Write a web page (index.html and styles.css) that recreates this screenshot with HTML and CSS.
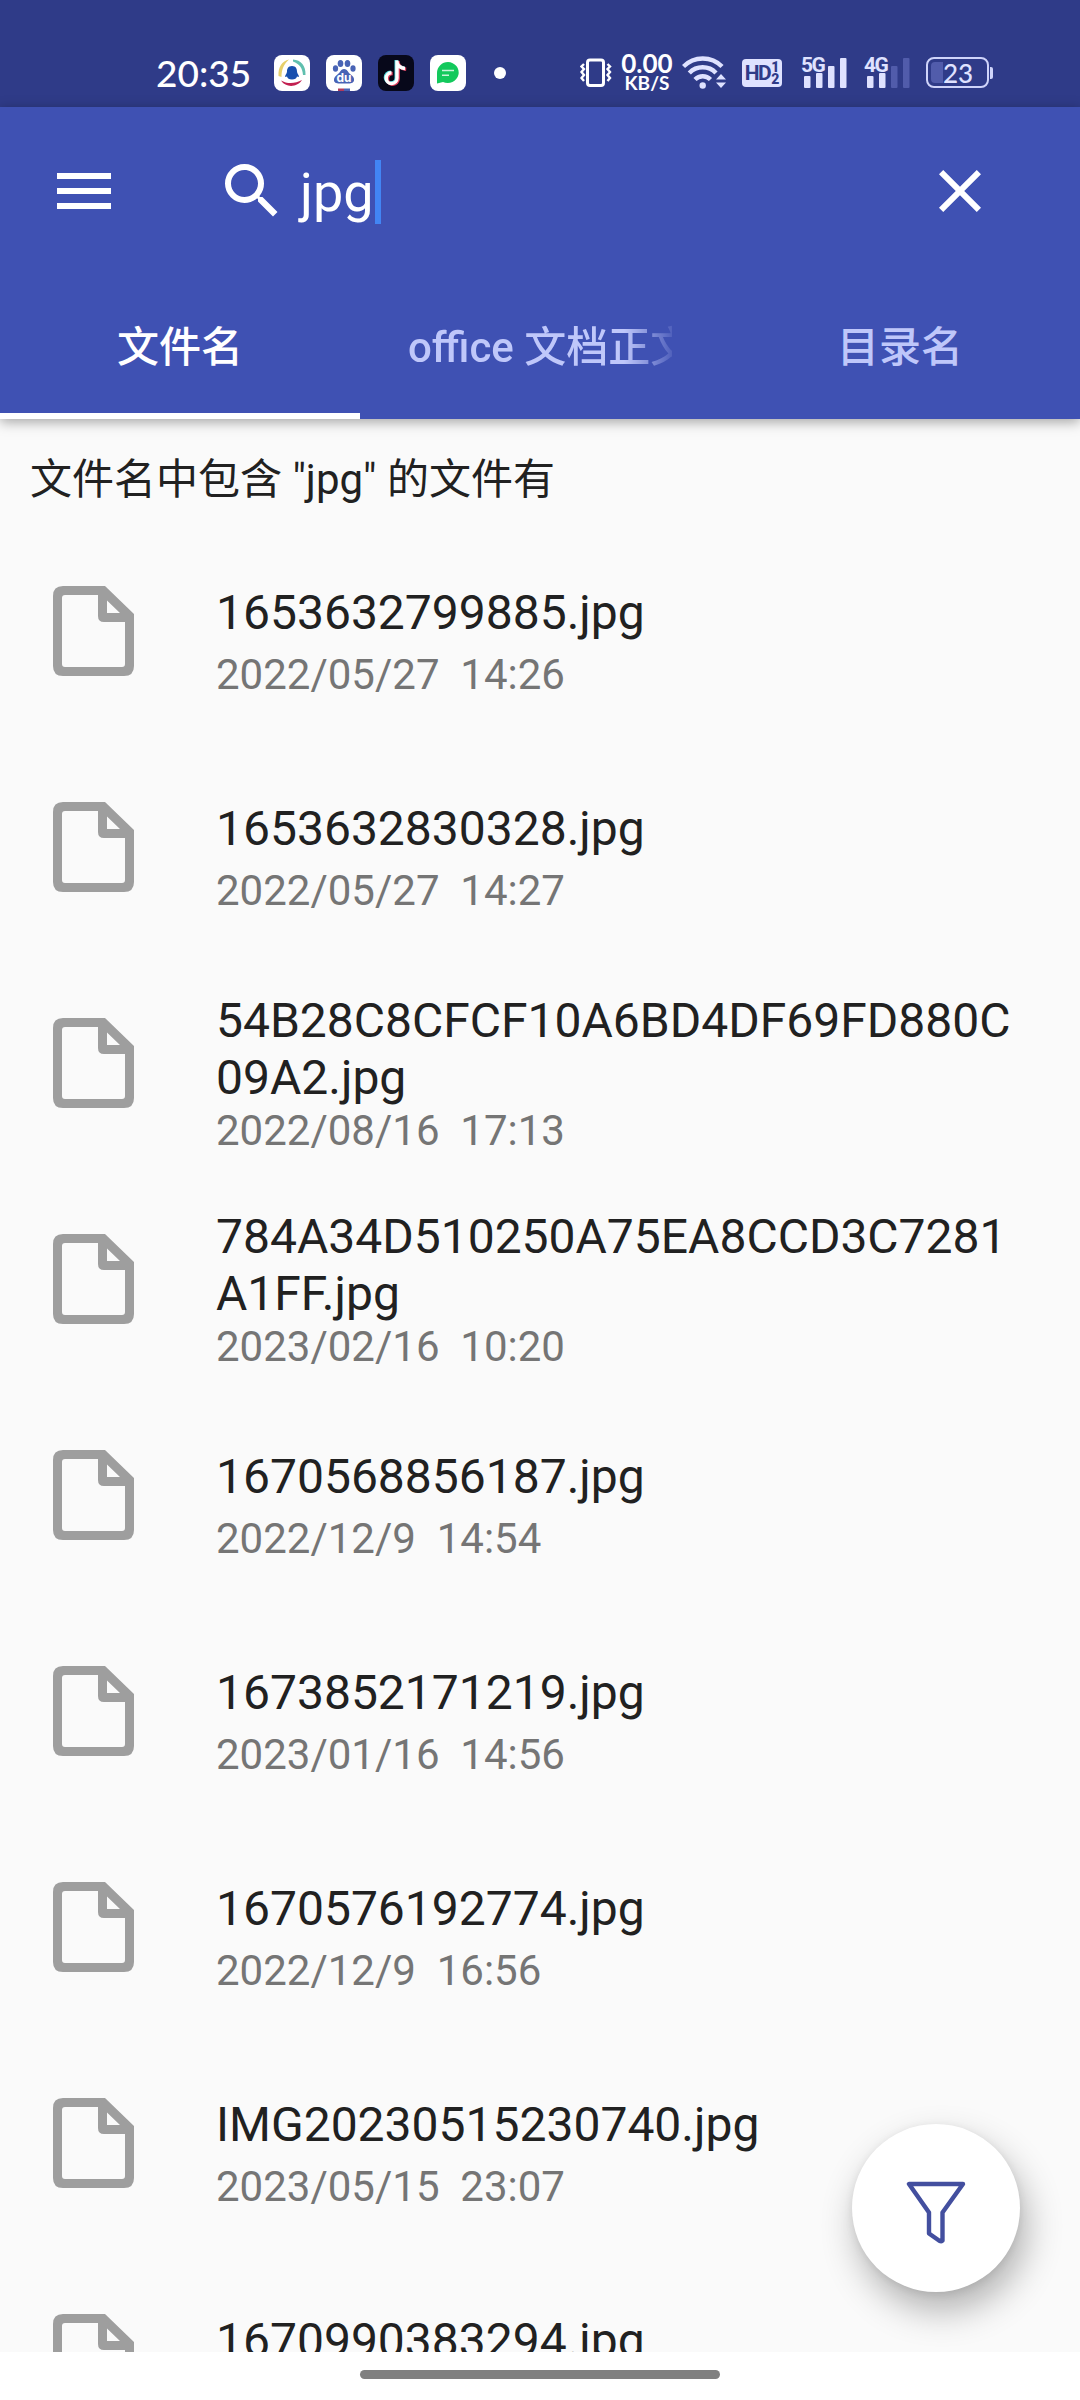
FILE: index.html
```html
<!DOCTYPE html>
<html lang="zh-CN">
<head>
<meta charset="utf-8">
<title>文件搜索</title>
<link rel="stylesheet" href="styles.css">
</head>
<body>
<svg class="defs" width="0" height="0" aria-hidden="true">
  <symbol id="file" viewBox="0 0 81 90">
    <path fill-rule="evenodd" d="M10 0H52L81 28V80Q81 90 71 90H10Q0 90 0 80V10Q0 0 10 0ZM12 9Q9 9 9 12V78Q9 81 12 81H69Q72 81 72 78V36H51Q45 36 45 30V9ZM54 14.5V27H67Z"/>
  </symbol>
</svg>
<div class="screen">
  <div class="status">
    <span class="clock">20:35</span>
    <div class="apps">
      <svg width="36" height="36" viewBox="0 0 36 36">
        <rect width="36" height="36" rx="8" fill="#fff"/>
        <path d="M4.500 21C4 12 8 6 15 4.500 10 9 7.500 14 7.500 22z" fill="#e6cf6a"/>
        <path d="M19 4.500C27 5 32 11 31.500 20L29 20C28.500 13 25.500 9 19 6.500z" fill="#5fbfae"/>
        <path d="M7 25.500C13 29 21 29 28 25 24 32 12 33.500 7 25.500z" fill="#c22050"/>
        <path d="M18 11c-4 0-5 3-5 5.500 0 2-2 3.500-2 5.500l2-.5c.5 2 2 3 5 3s4.500-1 5-3l2 .5c0-2-2-3.500-2-5.500 0-2.500-1-5.500-5-5.500z" fill="#174fae"/>
      </svg>
      <svg width="36" height="36" viewBox="0 0 36 36">
        <rect width="36" height="36" rx="8" fill="#fff"/>
        <g fill="#4863b5">
          <ellipse cx="9.500" cy="13.500" rx="2.600" ry="3.300"/><ellipse cx="14.500" cy="8.500" rx="2.800" ry="3.600"/>
          <ellipse cx="21.500" cy="8.500" rx="2.800" ry="3.600"/><ellipse cx="27" cy="13.500" rx="2.600" ry="3.300"/>
          <path d="M18 14c3 0 4 3 6 5 3 2 4.500 4 4 6.500-.8 3.500-5 3-10 3s-9.500.5-10-3C7.500 23 9.500 21 12 19c2.500-2 3-5 6-5z"/>
        </g>
        <text x="18" y="26.500" class="du">du</text>
        <path d="M12 33.500h6v2.500h-6z" fill="#b23a5c"/><path d="M18 33.500h6v2.500h-6z" fill="#4863b5"/>
      </svg>
      <svg width="36" height="36" viewBox="0 0 36 36">
        <rect width="36" height="36" rx="8" fill="#07081a"/>
        <g fill="none" stroke-width="3.400">
          <path d="M19 5.500v17.500a5.400 5.400 0 1 1-5.500-5.300M19 7.500q1.500 5.500 8 6" stroke="#4ed6dc" transform="translate(-.8 -.6)"/>
          <path d="M19 5.500v17.500a5.400 5.400 0 1 1-5.500-5.300M19 7.500q1.500 5.500 8 6" stroke="#e0405f" transform="translate(1.200 .8)"/>
          <path d="M19 5.500v17.500a5.400 5.400 0 1 1-5.500-5.300M19 7.500q1.500 5.500 8 6" stroke="#fff"/>
        </g>
      </svg>
      <svg width="36" height="36" viewBox="0 0 36 36">
        <rect width="36" height="36" rx="8" fill="#fff"/>
        <path d="M18 7a11 10.500 0 1 1-5 20L7 28.500V18A11 11 0 0 1 18 7z" fill="#13c95c"/>
        <path d="M12 15.500h12M12 20.200h7" stroke="#c9f5da" stroke-width="1.500"/>
      </svg>
    </div>
    <i class="dot"></i>
    <svg class="vibrate" width="32" height="30" viewBox="0 0 32 30" fill="none" stroke="#fff">
      <rect x="7.500" y="2" width="16" height="25.500" rx="2.500" stroke-width="3"/>
      <path d="M4 6 1.500 8.500 4 11 1.500 14 4 17 1.500 20 4 23M27.500 6 30 8.500 27.500 11 30 14 27.500 17 30 20 27.500 23" stroke-width="2.400"/>
    </svg>
    <div class="speed"><span>0.00</span><span>KB/S</span></div>
    <svg class="wifi" width="46" height="36" viewBox="0 0 46 36" fill="none" stroke="#dfe2ff" stroke-width="4.400">
      <path d="M1.500 11.500A27 27 0 0 1 40 11.500M7.300 18A18.500 18.500 0 0 1 34 18M13 24.500A11 11 0 0 1 28.500 24.500"/>
      <circle cx="20.700" cy="30.500" r="3.200" fill="#dfe2ff" stroke="none"/>
      <path d="M34 24.500 39 19 44 24.500zM34 27.500H44L39 33z" fill="#dfe2ff" stroke="none"/>
    </svg>
    <div class="hd"><span>HD</span><span class="sims"><b>1</b><b>2</b></span></div>
    <div class="signal">
      <span>5G</span>
      <svg width="44" height="31" viewBox="0 0 44 31" fill="#dfe2ff"><rect y="19" width="6.500" height="12" rx="1"/><rect x="12" y="16" width="6.500" height="15" rx="1"/><rect x="24" y="9" width="6.500" height="22" rx="1"/><rect x="36" y="1" width="6.500" height="30" rx="1"/></svg>
    </div>
    <div class="signal second">
      <span>4G</span>
      <svg width="44" height="31" viewBox="0 0 44 31" fill="#dfe2ff"><rect y="19" width="6.500" height="12" rx="1"/><rect x="12" y="16" width="6.500" height="15" rx="1"/><g fill="#515cab"><rect x="24" y="9" width="6.500" height="22" rx="1"/><rect x="36" y="1" width="6.500" height="30" rx="1"/></g></svg>
    </div>
    <div class="battery"><i class="level"></i><span>23</span></div><i class="nub"></i>
  </div>
  <header class="appbar">
    <div class="toolbar">
      <svg class="icon" viewBox="0 0 24 24"><path d="M3 18h18v-2H3v2zm0-5h18v-2H3v2zm0-7v2h18V6H3z"/></svg>
      <div class="search">
        <svg class="icon" viewBox="0 0 24 24"><path d="M15.500 14h-.79l-.28-.27A6.471 6.471 0 0 0 16 9.500 6.500 6.500 0 1 0 9.500 16c1.610 0 3.090-.59 4.230-1.570l.27.280v.79l5 4.990L20.490 19l-4.990-5zm-6 0C7.010 14 5 11.990 5 9.500S7.010 5 9.500 5 14 7.010 14 9.500 11.990 14 9.500 14z"/></svg>
        <span class="query">jpg</span><i class="caret"></i>
      </div>
      <svg class="icon" viewBox="0 0 24 24"><path d="M19 6.410L17.590 5 12 10.590 6.410 5 5 6.410 10.590 12 5 17.590 6.410 19 12 13.410 17.590 19 19 17.590 13.410 12z"/></svg>
    </div>
    <nav class="tabs">
      <div class="tab active"><span>文件名</span></div>
      <div class="tab"><span class="fade">office 文档正文</span></div>
      <div class="tab"><span>目录名</span></div>
    </nav>
  </header>
  <main class="content">
    <p class="summary">文件名中包含 "jpg" 的文件有</p>
    <ul class="files">
      <li><svg><use href="#file"/></svg><div><p class="name">1653632799885.jpg</p><p class="date">2022/05/27&nbsp; 14:26</p></div></li>
      <li><svg><use href="#file"/></svg><div><p class="name">1653632830328.jpg</p><p class="date">2022/05/27&nbsp; 14:27</p></div></li>
      <li class="tall"><svg><use href="#file"/></svg><div><p class="name">54B28C8CFCF10A6BD4DF69FD880C<wbr>09A2.jpg</p><p class="date">2022/08/16&nbsp; 17:13</p></div></li>
      <li class="tall"><svg><use href="#file"/></svg><div><p class="name">784A34D510250A75EA8CCD3C7281<wbr>A1FF.jpg</p><p class="date">2023/02/16&nbsp; 10:20</p></div></li>
      <li><svg><use href="#file"/></svg><div><p class="name">1670568856187.jpg</p><p class="date">2022/12/9&nbsp; 14:54</p></div></li>
      <li><svg><use href="#file"/></svg><div><p class="name">1673852171219.jpg</p><p class="date">2023/01/16&nbsp; 14:56</p></div></li>
      <li><svg><use href="#file"/></svg><div><p class="name">1670576192774.jpg</p><p class="date">2022/12/9&nbsp; 16:56</p></div></li>
      <li><svg><use href="#file"/></svg><div><p class="name">IMG20230515230740.jpg</p><p class="date">2023/05/15&nbsp; 23:07</p></div></li>
      <li><svg><use href="#file"/></svg><div><p class="name">1670990383294.jpg</p></div></li>
    </ul>
    <div class="fab">
      <svg width="60" height="64" viewBox="0 0 60 64" fill="none" stroke="#434f9f" stroke-width="4.400" stroke-linejoin="round"><path d="M3 4H57L36.500 32.500V60.500Q35.500 62 33 60.500L23 53.500V32.500Z"/></svg>
    </div>
  </main>
  <footer class="gesture"><i></i></footer>
</div>
</body>
</html>
```
FILE: styles.css
```css
* { box-sizing: border-box; margin: 0; padding: 0; }
body { background: #fff; }
svg { display: block; flex: none; }
.defs { position: absolute; }
.screen {
  width: 1080px; height: 2400px; overflow: hidden;
  display: flex; flex-direction: column;
  font-family: Roboto, "Noto Sans CJK SC", sans-serif;
  color: #212121;
}

/* status bar */
.status {
  height: 107px; flex: none; padding: 38px 0 0 156px;
  display: flex; align-items: center;
  background: #2f3b88; color: #fff;
}
.clock { width: 118px; font: 500 37px/38px Lato, sans-serif; white-space: nowrap; }
.apps { display: flex; gap: 16px; }
.du { font: 700 12px Inter, sans-serif; fill: #fff; text-anchor: middle; }
.dot { width: 12px; height: 12px; margin-left: 28px; border-radius: 50%; background: #fff; }
.vibrate { margin-left: 74px; }
.speed {
  width: 56px; margin-left: 7px; display: flex; flex-direction: column; align-items: center;
  font: 700 26px/20px Lato, sans-serif;
}
.speed span + span { font-size: 19px; line-height: 19px; }
.wifi { margin-left: 7px; }
.hd {
  width: 40px; height: 28px; margin-left: 14px; border-radius: 4px;
  display: flex; align-items: center; justify-content: center; gap: 1px;
  background: #dfe2ff; color: #2f3b88; font: 700 21px/28px Roboto, sans-serif; letter-spacing: -1.500px;
}
.sims { display: flex; flex-direction: column; letter-spacing: 0; }
.sims b { font-size: 14px; line-height: 12px; }
.signal { position: relative; width: 47px; margin-left: 19px; padding-left: 3px; color: #dfe2ff; }
.signal span { position: absolute; left: 0; top: -3px; font: 700 21px/22px Roboto, sans-serif; letter-spacing: -1.500px; }
.second { margin-left: 16px; }
.battery {
  position: relative; width: 63px; height: 31px; margin-left: 15px;
  border: 2.500px solid #cfd4fa; border-radius: 8px;
  display: flex; align-items: center; padding-left: 3px;
  font: 500 26px/26px Lato, sans-serif; color: #dfe2ff;
}
.level { width: 12px; height: 21px; border-radius: 4px 0 0 4px; background: #515cab; }
.nub { width: 3px; height: 12px; margin-left: 1px; border-radius: 0 2px 2px 0; background: #cfd4fa; }

/* app bar */
.appbar {
  position: relative; z-index: 1; height: 312px; flex: none;
  background: #3f51b3; color: #fff;
  box-shadow: 0 3px 12px rgba(0, 0, 0, .35);
}
.toolbar { height: 168px; padding: 0 84px 0 48px; display: flex; align-items: center; }
.icon { width: 72px; height: 72px; fill: #fff; }
.search { flex: 1; margin-left: 96px; display: flex; align-items: center; }
.query { margin-left: 12px; padding-top: 4px; font-size: 54px; line-height: 64px; }
.caret { width: 6px; height: 64px; margin: 2px 0 0 1px; background: #4285f4; }
.tabs { height: 144px; display: grid; grid-template-columns: repeat(3, 360px); }
.tab {
  display: flex; align-items: center; justify-content: center;
  padding: 8px 48px 0; border-bottom: 6px solid transparent;
  font-size: 42px; font-weight: 500; line-height: 60px; color: #bfc7fa; white-space: nowrap;
}
.active { color: #fff; border-color: #fff; }
.fade {
  width: 264px; overflow: hidden;
  -webkit-mask-image: linear-gradient(90deg, #000 216px, transparent 272px);
  mask-image: linear-gradient(90deg, #000 216px, transparent 272px);
}

/* results */
.content { position: relative; flex: 1; min-height: 0; overflow: hidden; background: #fafafa; }
.summary { height: 104px; padding: 31px 30px 0; font-size: 42px; line-height: 60px; }
.files { list-style: none; }
.files li { height: 216px; padding: 21px 60px 0 53px; display: flex; align-items: center; gap: 82px; }
.files svg { width: 81px; height: 90px; margin-top: -21px; fill: #9e9e9e; }
.name { font-size: 48px; line-height: 57px; margin-bottom: 9px; }
.tall .name { margin-bottom: 0; }
.date { min-height: 49px; font-size: 42px; line-height: 49px; color: #757575; }
.files li:last-child .name { margin-bottom: 58px; }
.fab {
  position: absolute; right: 60px; bottom: 60px; width: 168px; height: 168px;
  border-radius: 50%; display: flex; align-items: center; justify-content: center;
  padding-top: 8px; background: #fff;
  box-shadow: 6px 18px 36px rgba(0, 0, 0, .3), 0 2px 8px rgba(0, 0, 0, .08);
}

/* gesture bar */
.gesture { height: 48px; flex: none; padding-top: 18px; background: #fff; }
.gesture i { display: block; width: 360px; height: 9px; margin: 0 auto; border-radius: 5px; background: #808080; }
```
